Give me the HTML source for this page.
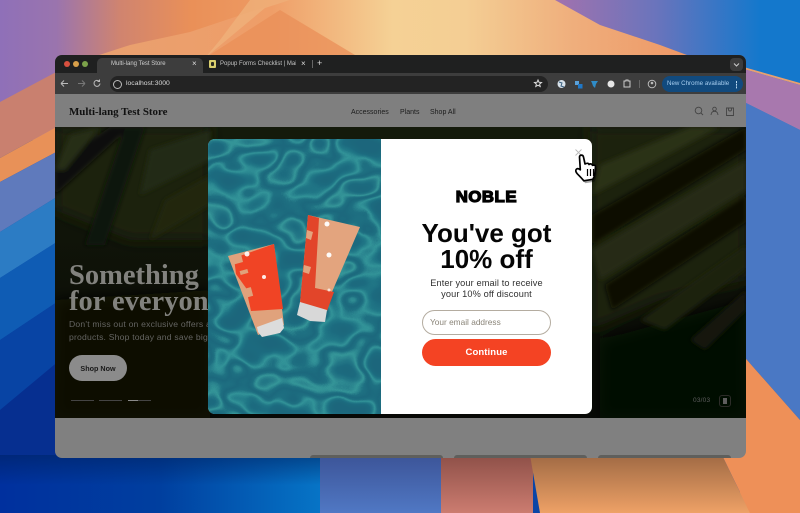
<!DOCTYPE html>
<html><head><meta charset="utf-8"><style>
html,body{margin:0;padding:0;width:800px;height:513px;overflow:hidden;background:#333}
body{position:relative;font-family:"Liberation Sans",sans-serif}
.a{position:absolute;white-space:nowrap}
svg{position:absolute;left:0;top:0;display:block}
</style></head><body>

<svg width="800" height="513" viewBox="0 0 800 513">
<defs>
<linearGradient id="top" x1="0" x2="1" y1="0" y2="0"><stop offset="0" stop-color="#8f70b8"/><stop offset=".07" stop-color="#9a74ae"/><stop offset=".15" stop-color="#d0846f"/><stop offset=".24" stop-color="#ea9058"/><stop offset=".38" stop-color="#ee9f68"/><stop offset=".68" stop-color="#a872ac"/><stop offset=".82" stop-color="#6a74bc"/><stop offset=".95" stop-color="#1478cc"/><stop offset="1" stop-color="#1478cc"/></linearGradient>
<linearGradient id="peak" x1="0" x2="1" y1="0" y2="0"><stop offset="0" stop-color="#e8a070"/><stop offset=".3" stop-color="#ef9e68"/><stop offset=".5" stop-color="#f5d195"/><stop offset=".62" stop-color="#f4ce94"/><stop offset=".8" stop-color="#efae7c"/><stop offset="1" stop-color="#ee9664"/></linearGradient>
<linearGradient id="botb" x1="0" x2="1" y1="0" y2="0"><stop offset="0" stop-color="#00309e"/><stop offset=".5" stop-color="#003f9f"/><stop offset="1" stop-color="#0674c6"/></linearGradient>
<linearGradient id="botd" x1="0" x2="0" y1="0" y2="1"><stop offset="0" stop-color="#00205c" stop-opacity=".55"/><stop offset="1" stop-color="#00205c" stop-opacity="0"/></linearGradient>
<linearGradient id="botp" x1="0" x2="0" y1="0" y2="1"><stop offset="0" stop-color="#3c5498"/><stop offset="1" stop-color="#5078c4"/></linearGradient>
<linearGradient id="boto" x1="0" x2="0" y1="0" y2="1"><stop offset="0" stop-color="#a06a44"/><stop offset="1" stop-color="#eea166"/></linearGradient>
<linearGradient id="botr" x1="0" x2="0" y1="0" y2="1"><stop offset="0" stop-color="#8e5048"/><stop offset="1" stop-color="#cc7c70"/></linearGradient>
</defs>
<rect width="800" height="513" fill="#0a45a6"/>
<rect width="800" height="140" fill="url(#top)"/>
<polygon points="90,58 130,45 190,32 250,12 290,0 555,0 600,25 660,45 695,58" fill="url(#peak)"/>
<polygon points="205,58 265,8 290,0 250,0 220,40" fill="#f0b47e" opacity=".7"/>
<polygon points="205,58 280,10 330,40 360,58" fill="#e98f58" opacity=".75"/>
<!-- left strip -->
<polygon points="0,102 60,70 60,125 0,158" fill="#c9806f"/>
<polygon points="0,158 60,125 60,150 0,182" fill="#e89158"/>
<polygon points="0,182 60,150 60,195 0,232" fill="#5f7abc"/>
<polygon points="0,232 60,195 60,240 0,278" fill="#2c7cc4"/>
<polygon points="0,278 60,240 60,300 0,340" fill="#0f5cb4"/>
<polygon points="0,340 60,300 60,460 0,460" fill="#0844a4"/>
<polygon points="0,410 60,360 60,460 0,460" fill="#062f90"/>
<!-- right strip -->
<polygon points="740,66 800,83 800,85 740,68" fill="#e8a070"/>
<polygon points="740,68 800,85 800,130 740,100" fill="#a878ae"/>
<polygon points="740,100 800,130 800,420 740,352" fill="#4a78c4"/>
<polygon points="740,352 800,420 800,513 740,513" fill="#ee9058"/>
<!-- bottom -->
<rect x="0" y="455" width="320" height="58" fill="url(#botb)"/>
<rect x="0" y="455" width="320" height="30" fill="url(#botd)"/>
<rect x="320" y="455" width="121" height="58" fill="url(#botp)"/>
<rect x="441" y="455" width="92" height="58" fill="url(#botr)"/>
<polygon points="530,455 722,455 750,513 540,513" fill="url(#boto)"/>
<polygon points="722,455 800,455 800,513 750,513" fill="#ee9058"/>
</svg>

<!-- window -->
<div class="a" style="left:55px;top:55px;width:691px;height:403px;border-radius:7px;overflow:hidden;background:#808080">
  <div class="a" style="left:0;top:0;width:691px;height:18px;background:#1f2020"></div>
  <div class="a" style="left:0;top:18px;width:691px;height:21px;background:#3d3d3d"></div>
  <div class="a" style="left:0;top:39px;width:691px;height:33px;background:#7f7f7f"></div>
</div>

<!-- traffic lights -->
<div class="a" style="left:64px;top:61px;width:6px;height:6px;border-radius:50%;background:#d8503f"></div>
<div class="a" style="left:73px;top:61px;width:6px;height:6px;border-radius:50%;background:#d8a04a"></div>
<div class="a" style="left:82px;top:61px;width:6px;height:6px;border-radius:50%;background:#7ca24a"></div>

<!-- tabs -->
<div class="a" style="left:97px;top:58px;width:106px;height:16px;background:#3d3d3d;border-radius:5px 5px 0 0"></div>
<div class="a" style="left:111px;top:60px;font-size:6px;line-height:9px;color:#cfcfcf">Multi-lang Test Store</div>
<div class="a" style="left:192px;top:59px;font-size:8px;line-height:10px;color:#ddd">×</div>
<div class="a" style="left:209px;top:60px;width:7px;height:8px;background:#d9cf6e;border-radius:1px"></div>
<div class="a" style="left:211px;top:62px;width:3px;height:4px;background:#2a2a20;border-radius:1px"></div>
<div class="a" style="left:220px;top:60px;font-size:6px;line-height:9px;color:#c4c4c4;width:76px;overflow:hidden">Popup Forms Checklist | Mailc</div>
<div class="a" style="left:301px;top:59px;font-size:8px;line-height:10px;color:#ddd">×</div>
<div class="a" style="left:312px;top:60px;width:1px;height:8px;background:#666"></div>
<div class="a" style="left:317px;top:58px;font-size:9px;line-height:11px;color:#ddd">+</div>
<div class="a" style="left:730px;top:58px;width:13px;height:13px;background:#3c3c3c;border-radius:4px"></div>
<svg width="800" height="513" style="pointer-events:none">
  <path d="M734 63.5l2.500 2.500 2.500-2.500" fill="none" stroke="#ccc" stroke-width="1"/>
  <path d="M68 83.500h-7M61 83.500l3-3M61 83.500l3 3" fill="none" stroke="#bbb" stroke-width="1"/>
  <path d="M78 83.500h7M85 83.500l-3-3M85 83.500l-3 3" fill="none" stroke="#777" stroke-width="1"/>
  <path d="M100 83.500a3 3 0 1 1-1-2.400M99.500 79.500v2h-2" fill="none" stroke="#bbb" stroke-width="1"/>
</svg>

<!-- omnibox -->
<div class="a" style="left:110px;top:76px;width:438px;height:16px;border-radius:8px;background:#232323"></div>
<div class="a" style="left:113px;top:80px;width:7px;height:7px;border-radius:50%;border:1px solid #bbb;box-sizing:content-box"></div>
<div class="a" style="left:126px;top:79px;font-size:6.800px;line-height:10px;color:#d8d8d8">localhost:3000</div>
<svg width="800" height="513">
  <path d="M538 80l1 2.300 2.500.2-1.900 1.600.6 2.400-2.200-1.300-2.200 1.300.6-2.400-1.900-1.600 2.500-.2z" fill="none" stroke="#ddd" stroke-width="1"/>
  <circle cx="561.500" cy="84" r="4" fill="#d8e2ea"/><path d="M559 82l3 1-1 3 3 1" stroke="#3a6080" fill="none"/>
  <rect x="575" y="81" width="4" height="4" fill="#5aa0d8"/><rect x="578" y="84" width="4.500" height="4.500" fill="#1f78c8"/>
  <path d="M591 81h7l-2 3 -1 4-2-2-1-3z" fill="#2f8cc8"/>
  <circle cx="611" cy="84" r="3.500" fill="#e6e6e6"/>
  <path d="M624 81h2v-1h2v1h2v6h-6z" fill="none" stroke="#ccc" stroke-width="1"/>
  <rect x="639" y="80" width="1" height="8" fill="#666"/>
  <circle cx="652" cy="84" r="3.800" fill="none" stroke="#bbb" stroke-width="1"/><circle cx="652" cy="83" r="1.300" fill="#bbb"/>
</svg>
<div class="a" style="left:662px;top:76px;width:81px;height:16px;border-radius:8px;background:#114a7e"></div>
<div class="a" style="left:667px;top:79px;font-size:6.200px;line-height:10px;color:#a6cdef">New Chrome available</div>
<div class="a" style="left:735.500px;top:81px;width:1.500px;height:1.500px;background:#b8d8f0;box-shadow:0 2.700px #b8d8f0,0 5.400px #b8d8f0"></div>

<!-- site header -->
<div class="a" style="left:69px;top:105px;font-family:'Liberation Serif',serif;font-weight:bold;font-size:10.900px;line-height:14px;color:#111">Multi-lang Test Store</div>
<div class="a" style="left:351px;top:106px;font-size:7px;line-height:11px;color:#1c1c1c;margin-top:1px">Accessories</div>
<div class="a" style="left:400px;top:106px;font-size:7px;line-height:11px;color:#1c1c1c;margin-top:1px">Plants</div>
<div class="a" style="left:430px;top:106px;font-size:7px;line-height:11px;color:#1c1c1c;margin-top:1px">Shop All</div>
<svg width="800" height="513">
  <circle cx="698.500" cy="110.500" r="3.300" fill="none" stroke="#444" stroke-width=".9"/><path d="M701 113l2 2" stroke="#444" stroke-width=".9"/>
  <circle cx="714.500" cy="109" r="1.800" fill="none" stroke="#444" stroke-width=".9"/><path d="M711 115c0-5 7-5 7 0" fill="none" stroke="#444" stroke-width=".9"/>
  <path d="M726.500 108h7v7.500h-7zM728.500 108v1.500a1.500 1.500 0 0 0 3 0V108" fill="none" stroke="#444" stroke-width=".9"/>
</svg>

<!-- hero -->
<svg width="800" height="513">
<defs>
  <clipPath id="hc"><rect x="55" y="127" width="691" height="291"/></clipPath>
  <linearGradient id="hg" x1="0" x2="0" y1="0" y2="1"><stop offset="0" stop-color="#141a0b"/><stop offset=".55" stop-color="#0e1108"/><stop offset="1" stop-color="#080906"/></linearGradient>
  <filter id="b2"><feGaussianBlur stdDeviation="2.500"/></filter>
  <filter id="b6"><feGaussianBlur stdDeviation="7"/></filter>
</defs>
<g clip-path="url(#hc)">
  <rect x="55" y="127" width="691" height="291" fill="url(#hg)"/>
  <g filter="url(#b6)">
    <polygon points="55,127 210,127 210,240 130,240 55,210" fill="#1d2410"/>
    <polygon points="590,127 746,127 746,280 660,300 590,330" fill="#1a200e"/>
    <polygon points="55,300 210,290 210,418 55,418" fill="#090b05"/>
    <polygon points="600,340 746,300 746,418 600,418" fill="#060705"/>
  </g>
  <g filter="url(#b2)">
    <polygon points="55,165 110,127 130,127 55,195" fill="#0d1008"/>
    <polygon points="125,127 145,127 105,245 85,245" fill="#0f1207"/>
    <polygon points="70,135 100,127 65,170 55,170" fill="#262e13"/>
    <polygon points="150,150 210,130 210,160 140,195" fill="#242b13"/>
    <polygon points="165,200 210,175 210,205 150,240" fill="#202711"/>
    <polygon points="592,215 746,127 746,150 592,245" fill="#0a0c06"/>
    <polygon points="600,165 690,127 720,127 592,195" fill="#293016"/>
    <polygon points="605,285 746,195 746,222 612,310" fill="#0a0c06"/>
    <polygon points="592,250 746,160 746,190 600,280" fill="#252c13"/>
    <polygon points="640,320 746,245 746,268 665,330" fill="#1e2410"/>
    <polygon points="690,340 746,290 746,310 705,350" fill="#14180b"/>
  </g>
</g>
</svg>

<div class="a" style="left:69px;top:263px;font-family:'Liberation Serif',serif;font-weight:bold;font-size:28.500px;line-height:25.500px;color:#82827e">Something<br>for everyone</div>
<div class="a" style="left:69px;top:317px;font-size:8.600px;line-height:13px;color:#646461;letter-spacing:.2px;margin-top:1px">Don't miss out on exclusive offers and<br>products. Shop today and save big on</div>
<div class="a" style="left:69px;top:355px;width:58px;height:26px;border-radius:13px;background:#8b8b8b;color:#1a1a1a;font-size:7.200px;font-weight:bold;line-height:27px;text-align:center">Shop Now</div>
<div class="a" style="left:71px;top:400px;width:23px;height:1px;background:#444"></div>
<div class="a" style="left:99px;top:400px;width:23px;height:1px;background:#444"></div>
<div class="a" style="left:128px;top:400px;width:23px;height:1px;background:#444"></div>
<div class="a" style="left:128px;top:400px;width:10px;height:1px;background:#8a8a8a"></div>
<div class="a" style="left:693px;top:396px;font-size:6.500px;line-height:10px;color:#5e5e5e;letter-spacing:.2px">03/03</div>
<div class="a" style="left:719px;top:395px;width:10px;height:10px;border:1px solid #2c2c28;border-radius:3px"></div>
<div class="a" style="left:723px;top:398px;width:1.500px;height:6px;background:#5e5e5e;box-shadow:2px 0 #5e5e5e"></div>

<!-- lower cards peek -->
<div class="a" style="left:310px;top:455px;width:133px;height:3px;background:#5f5f5c;border-radius:3px 3px 0 0"></div>
<div class="a" style="left:454px;top:455px;width:133px;height:3px;background:#5f5f5c;border-radius:3px 3px 0 0"></div>
<div class="a" style="left:598px;top:455px;width:133px;height:3px;background:#5f5f5c;border-radius:3px 3px 0 0"></div>

<!-- modal -->
<div class="a" style="left:208px;top:139px;width:384px;height:275px;border-radius:7px;background:#fff;overflow:hidden">
  <svg width="173" height="275" viewBox="208 139 173 275" style="left:0;top:0">
    <defs>
      <filter id="water" x="0" y="0" width="100%" height="100%" color-interpolation-filters="sRGB">
        <feTurbulence type="fractalNoise" baseFrequency="0.022 0.03" numOctaves="2" seed="11"/>
        <feColorMatrix type="matrix" values="1 0 0 0 0 1 0 0 0 0 1 0 0 0 0 0 0 0 0 1"/>
        <feComponentTransfer>
          <feFuncR type="table" tableValues="0.11 0.11 0.11 0.11 0.11 0.11 0.11 0.11 0.13 0.20 0.12 0.11 0.12 0.21 0.14 0.11 0.11 0.11 0.11 0.11 0.11"/>
          <feFuncG type="table" tableValues="0.40 0.40 0.40 0.40 0.40 0.40 0.41 0.42 0.47 0.58 0.44 0.41 0.44 0.59 0.47 0.42 0.41 0.40 0.40 0.40 0.40"/>
          <feFuncB type="table" tableValues="0.49 0.49 0.49 0.49 0.49 0.49 0.49 0.50 0.53 0.60 0.51 0.49 0.51 0.60 0.53 0.50 0.49 0.49 0.49 0.49 0.49"/>
        </feComponentTransfer>
      </filter>
    </defs>
    <rect x="208" y="139" width="173" height="275" fill="#1f7484"/>
    <rect x="208" y="139" width="173" height="275" filter="url(#water)"/>
    <!-- left tube -->
    <polygon points="228,256 274,244 284,325 258,335" fill="#e0a27c"/>
    <polygon points="234,258 274,244 283,309 251,311 246,288 236,274" fill="#f04425"/>
    <polygon points="229,257 241,254 243,262 232,265" fill="#e0a27c"/>
    <rect x="240" y="270" width="8" height="4" fill="#e0a27c" transform="rotate(-15 244 272)"/>
    <rect x="245" y="288" width="7" height="9" fill="#e0a27c" transform="rotate(-15 248 292)"/>
    <polygon points="257,327 282,318 284,328 280,333 262,337 258,332" fill="#dcdcdc"/>
    <circle cx="247" cy="254" r="2.500" fill="#fff" opacity=".9"/>
    <circle cx="264" cy="277" r="2" fill="#fff" opacity=".9"/>
    <!-- right tube -->
    <polygon points="308,215 360,227 332,292 327,311 300,303" fill="#e3a47e"/>
    <polygon points="308,215 319,218 315,288 334,292 327,311 300,303" fill="#e2452a"/>
    <polygon points="307,230 313,232 311,240 306,238" fill="#e3a47e"/>
    <polygon points="304,265 311,267 309,274 303,272" fill="#e3a47e"/>
    <polygon points="300,302 327,310 325,322 310,321 297,315" fill="#d8d8d8"/>
    <circle cx="327" cy="224" r="2.500" fill="#fff" opacity=".95"/>
    <circle cx="329" cy="255" r="2.500" fill="#fff" opacity=".95"/>
    <circle cx="329" cy="290" r="1.500" fill="#fff" opacity=".7"/>
  </svg>

  <div class="a" style="left:173px;top:50px;width:211px;text-align:center;height:18px;line-height:18px"><span style="display:inline-block;font-weight:bold;font-size:15.500px;letter-spacing:.5px;color:#000;-webkit-text-stroke:1.200px #000;transform:scaleX(1.08)">NOBLE</span></div>
  <div class="a" style="left:173px;top:81px;width:211px;text-align:center;font-weight:bold;font-size:26px;line-height:26px;color:#050505">You've got<br>10% off</div>
  <div class="a" style="left:173px;top:139px;width:211px;text-align:center;font-size:9.200px;line-height:11px;color:#303030;letter-spacing:.12px">Enter your email to receive<br>your 10% off discount</div>
  <div class="a" style="left:214px;top:171px;width:129px;height:25px;box-sizing:border-box;border:1px solid #b4aca0;border-radius:13px;background:#fff;color:#8a8478;font-size:8.300px;line-height:23px;padding-left:7px">Your email address</div>
  <div class="a" style="left:214px;top:200px;width:129px;height:27px;border-radius:14px;background:#f44323;color:#fff;font-weight:bold;font-size:9.500px;line-height:27px;text-align:center;letter-spacing:.1px">Continue</div>
</div>

<!-- close + cursor -->
<svg width="800" height="513">
  <path d="M575.500 149.500l6 6M581.500 149.500l-6 6" stroke="#bbb" stroke-width=".9" fill="none"/>
  <path d="M581 158c0-2.500 3.500-2.500 4 0l1.500 7c2-1 3.500-1 4 0.500 1.500-1 3-.7 3.500.8 1.500-.5 3-.1 3 1.500l-.7 7c-.3 2.500-1 4-2 5.500l-9 1.500c-2-2.500-4.500-5-6.500-7-1.500-1.500-2-3.500-1-4.500s2.500-.7 4 .5z" fill="#000" opacity=".35" transform="translate(0 1.500)"/>
  <path d="M579.500 157c0-2.500 3.500-2.500 4 0l1.500 7c2-1 3.500-1 4 0.500 1.500-1 3-.7 3.500.8 1.500-.5 3-.1 3 1.500l-.7 7c-.3 2.500-1 4-2 5.500l-9 1.500c-2-2.500-4.500-5-6.500-7-1.500-1.500-2-3.500-1-4.500s2.500-.7 4 .5z" fill="#fff" stroke="#000" stroke-width="1.700" stroke-linejoin="round"/>
  <path d="M587.500 169v7M590.500 169v7M593.500 169v7" stroke="#000" stroke-width="1.200"/>
</svg>

</body></html>
